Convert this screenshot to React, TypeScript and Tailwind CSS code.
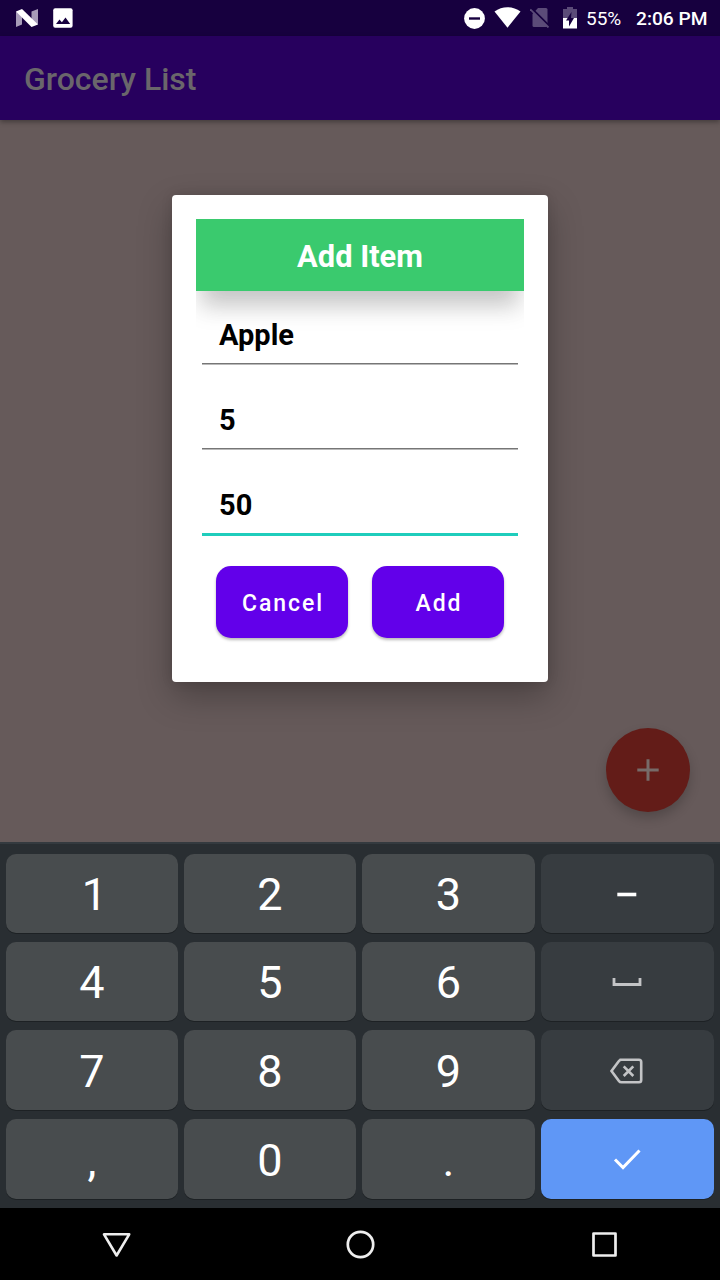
import React from "react";

const shade = "bg-[#484c4e]";
const dark = "bg-[#373c40]";

function StatusBar() {
  return (
    <header className="flex h-9 shrink-0 items-center bg-[#17003f] text-white">
      <svg className="ml-4 h-[18px] w-[22px]" viewBox="0 0 22 18">
        <path d="M0 2.500L6 5v10.500L0 18zM15.500 2.500L22 0v15.500L15.500 13z" fill="#a79cb8" />
        <path d="M0 2.500L6 0l16 15.500L15.500 18z" fill="#fff" />
      </svg>
      <svg className="ml-[15px] h-5 w-5" viewBox="0 0 20 20">
        <rect x="0.200" y="0.200" width="19.400" height="19.600" rx="2" fill="#fff" />
        <path d="M3 16l3.500-4.500 2.400 2.800L12.500 9.500l4.700 6.500z" fill="#17003f" />
      </svg>
      <svg className="ml-[391px] h-[21px] w-[21px]" viewBox="0 0 21 21">
        <circle cx="10.500" cy="10.500" r="10.400" fill="#fff" />
        <path d="M5 10.500h11" stroke="#17003f" strokeWidth="2.400" />
      </svg>
      <svg className="ml-[9px] h-[22px] w-[27px]" viewBox="0 0 27 22">
        <path d="M0.500 4.500C8-1.200 19-1.200 26.500 4.500L13.500 20.700z" fill="#fff" />
      </svg>
      <svg className="ml-[9px] h-[20px] w-5" viewBox="0 0 20 20">
        <path d="M2.500 6L8 0h8q1.500 0 1.500 1.500v16q0 1.500-1.500 1.500H4q-1.500 0-1.500-1.500z" fill="#5b4b78" />
        <path d="M1.500 .200L19.500 18.200" stroke="#17003f" strokeWidth="2" />
        <path d="M.3 1.300L18.500 19.500" stroke="#5b4b78" strokeWidth="1.800" />
      </svg>
      <svg className="-mt-px ml-[13px] h-[22px] w-[14px]" viewBox="0 0 14 22">
        <path d="M0 2h4V0h6v2h4v9H0z" fill="#5b4b78" />
        <path d="M0 11h14v10.500H0z" fill="#fff" />
        <path d="M8.500 5L3 13.500h3V19.500l5-8.500H8z" fill="#17003f" />
      </svg>
      <span className="ml-[9px] w-[36px] pt-px text-[19px] leading-9">55%</span>
      <span className="ml-[14px] whitespace-nowrap pt-px text-[19.200px] leading-9 font-medium">2:06 PM</span>
    </header>
  );
}

function Field({ value, active = false }: { value: string; active?: boolean }) {
  return (
    <div className="mx-[6px] h-[85px]">
      <div className="flex h-[61px] items-center pt-[5px] pl-[17px] text-[29px] font-bold text-black">{value}</div>
      <div className="h-0">
        {active ? (
          <div className="-mt-px h-[3px] bg-[#1fcdbc]" />
        ) : (
          <div className="-mt-px h-[2px] border-t border-[#767676] bg-[#b9b9b9]" />
        )}
      </div>
    </div>
  );
}

function DialogButton({ label }: { label: string }) {
  return (
    <button className="h-[72px] w-[132px] rounded-[15px] bg-[#6200ea] pt-[4px] pl-[2px] text-[23px] font-medium tracking-[1.900px] text-white shadow-[0_2px_3px_rgba(0,0,0,0.28)]">
      {label}
    </button>
  );
}

function AddItemDialog() {
  return (
    <section className="h-[487px] w-[376px] rounded-[4px] bg-white p-6 shadow-[0_14px_34px_rgba(0,0,0,0.28),0_0_12px_rgba(0,0,0,0.1)]">
      <div className="h-[439px] overflow-hidden">
        <h2 className="flex h-[72px] items-center justify-center bg-[#3aca6e] pt-[3px] text-[30.800px] leading-9 font-bold text-white shadow-[0_20px_22px_-8px_rgba(0,0,0,0.17),0_20px_24px_rgba(0,0,0,0.08)]">
          Add Item
        </h2>
        <div className="relative pt-[12px]">
          <Field value="Apple" />
          <Field value="5" />
          <Field value="50" active />
        </div>
        <div className="mt-[8px] flex justify-center gap-6">
          <DialogButton label="Cancel" />
          <DialogButton label="Add" />
        </div>
      </div>
    </section>
  );
}

function Key({ children, tone = shade }: { children: React.ReactNode; tone?: string }) {
  return (
    <button className={`flex items-center justify-center rounded-[10px] text-[45px] leading-none text-white shadow-[0_1px_0_#1d2124] ${tone}`}>
      {children}
    </button>
  );
}

function Digit({ children }: { children: string }) {
  return (
    <Key>
      <span className={children === "1" ? "pt-[2px] pl-[5px]" : "pt-[2px]"}>{children}</span>
    </Key>
  );
}

function Keyboard() {
  return (
    <div className="grid h-[366px] shrink-0 grid-cols-[172px_172px_173px_173px] grid-rows-[79px_79px_80px_80px] gap-x-[6px] gap-y-[9px] border-t-2 border-[#343a3f] bg-[#292e32] px-[6px] pt-[10px]">
      <Digit>1</Digit>
      <Digit>2</Digit>
      <Digit>3</Digit>
      <Key tone={dark}>
        <svg className="mr-[2px] h-10 w-10" viewBox="0 0 40 40"><path d="M10.300 20.500h19" stroke="#fff" strokeWidth="3.600" /></svg>
      </Key>
      <Digit>4</Digit>
      <Digit>5</Digit>
      <Digit>6</Digit>
      <Key tone={dark}>
        <svg className="mr-[2px] h-10 w-10" viewBox="0 0 40 40"><path d="M7 16v6.500h26v-6.500" fill="none" stroke="#c3c4c6" strokeWidth="2.800" /></svg>
      </Key>
      <Digit>7</Digit>
      <Digit>8</Digit>
      <Digit>9</Digit>
      <Key tone={dark}>
        <svg className="mr-px h-10 w-10" viewBox="0 0 40 40" fill="none" stroke="#c3c4c6" strokeWidth="2.600">
          <path d="M12.500 9.700H32Q34.200 9.700 34.200 12v18q0 2.300-2.200 2.300H14.500q-1.700 0-2.600-1.300L4.500 21l7.400-10q.9-1.300 2.600-1.300z" />
          <path d="M16.700 16.400l9.600 9.600m0-9.600L16.700 26" />
        </svg>
      </Key>
      <Digit>,</Digit>
      <Digit>0</Digit>
      <Digit>.</Digit>
      <Key tone="bg-[#5f97f6]">
        <svg className="mr-[2px] mb-[2px] h-10 w-10" viewBox="0 0 40 40"><path d="M8 21.500l8 8L32.500 12.500" fill="none" stroke="#fff" strokeWidth="3" /></svg>
      </Key>
    </div>
  );
}

export default function App() {
  return (
    <div className="flex h-[1280px] w-[720px] flex-col overflow-hidden bg-black font-['Roboto',sans-serif]">
      <StatusBar />
      <div className="relative z-10 flex h-[84px] shrink-0 items-center bg-[#27005e] pt-[2px] pl-6 shadow-[0_2px_5px_rgba(0,0,0,0.35)]">
        <h1 className="text-[32px] font-medium text-[#6a666b]">Grocery List</h1>
      </div>
      <main className="relative flex h-[722px] shrink-0 items-start justify-center overflow-hidden bg-[#665a5a] pt-[75px]">
        <button className="absolute right-[30px] bottom-[30px] flex h-[84px] w-[84px] items-center justify-center rounded-full bg-[#631c18] shadow-[0_6px_12px_rgba(0,0,0,0.2)]">
          <svg className="h-6 w-6" viewBox="0 0 24 24"><path d="M12 1.300v21.400M1.300 12h21.400" stroke="#776b69" strokeWidth="3" /></svg>
        </button>
        <AddItemDialog />
      </main>
      <Keyboard />
      <nav className="flex h-[72px] shrink-0 items-center bg-black">
        <svg className="ml-[102px] h-[30px] w-[30px]" viewBox="0 0 30 30" fill="none" stroke="#eee" strokeWidth="2.600" strokeLinejoin="round"><path d="M2 5.300h25.200L14.600 26.500z" /></svg>
        <svg className="ml-[213px] h-[30px] w-[30px]" viewBox="0 0 30 30" fill="none" stroke="#eee" strokeWidth="2.700"><circle cx="15.500" cy="15.500" r="12.700" /></svg>
        <svg className="ml-[214px] h-[30px] w-[30px]" viewBox="0 0 30 30" fill="none" stroke="#eee" strokeWidth="2.700" strokeLinejoin="round"><path d="M4.500 4.500h22v22h-22z" /></svg>
      </nav>
    </div>
  );
}
